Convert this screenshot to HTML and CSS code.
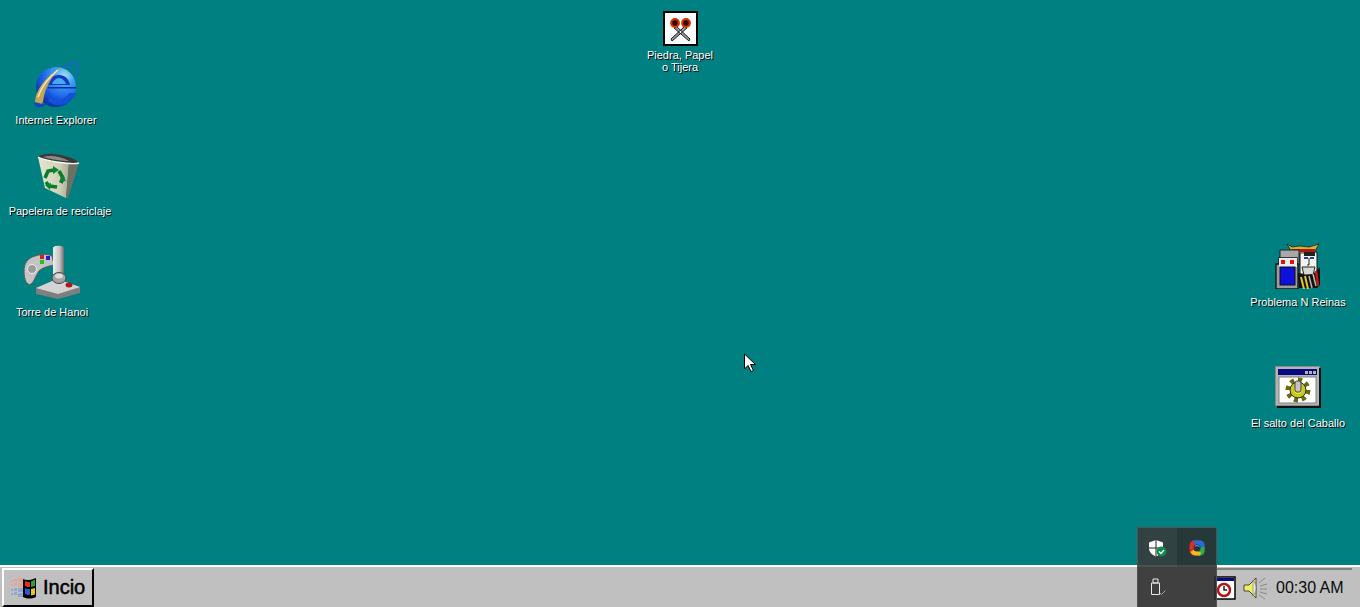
FILE: index.html
```html
<!DOCTYPE html>
<html lang="es">
<head>
  <meta charset="UTF-8">
  <title>Escritorio</title>
  <link rel="stylesheet" href="styles.css">
</head>
<body>
  <div class="desktop">
    <div class="desk-icon at-ie">
      <svg class="glyph" width="48" height="48" viewBox="0 0 48 48">
        <defs>
          <radialGradient id="ieBlue" cx="0.7" cy="0.22" r="0.85">
            <stop offset="0" stop-color="#a8e4fa"/>
            <stop offset="0.3" stop-color="#3f9ff4"/>
            <stop offset="0.65" stop-color="#1860e8"/>
            <stop offset="1" stop-color="#0a2c98"/>
          </radialGradient>
        </defs>
        <path d="M30 8C38 2 46 0 46 4c0 3-1 8-3 13" fill="none" stroke="#1c5fd8" stroke-width="1.500"/>
        <circle cx="24" cy="26" r="20" fill="url(#ieBlue)"/>
        <path d="M16 24c1-6 5-10 11-10s10 4 11 10z" fill="#0f3cc0"/>
        <path d="M20 23c1-3 4-6 7-6s6 3 7 6z" fill="#48a8f6"/>
        <path d="M16 26h28v1.500H16z" fill="#0c2c9c"/>
        <path d="M16 28c1 6 5 10 11 10 4 0 8-2 10-6h7c-3 7-9 12-17 12-4 0-7-1-10-3z" fill="#1450d8"/>
        <path d="M3 41C3 31 12 16 30 6c-11 10-17 20-19 35-2 3-6 3-8 0z" fill="#c4a558"/>
        <path d="M6 36C9 27 16 17 26 9" fill="none" stroke="#f2e8b8" stroke-width="1.600"/>
        <path d="M2 41c0 5 5 7 10 4 2-1 4-2 6-4-4 2-8 3-11 1z" fill="#1846c0"/>
      </svg>
      <span class="label">Internet Explorer</span>
    </div>

    <div class="desk-icon at-trash">
      <svg class="glyph" width="48" height="48" viewBox="0 0 48 48">
        <defs>
          <linearGradient id="binSide" x1="0" x2="1" y1="0" y2="0">
            <stop offset="0" stop-color="#e4e8d0"/>
            <stop offset="0.7" stop-color="#cdd1b6"/>
            <stop offset="1" stop-color="#a8ab96"/>
          </linearGradient>
        </defs>
        <path d="M2 5l31 6-3 35-21-10z" fill="url(#binSide)"/>
        <path d="M33 11l10 0-11 35-2 0z" fill="#6f7064"/>
        <path d="M2 5c4-4 13-4 23-2 8 2 15 4 18 8-8 2-33-2-41-6z" fill="#3a3a3a"/>
        <path d="M7 5c7-2 17-1 26 4-8 0-19-2-26-4z" fill="#8c8c8c"/>
        <path d="M2 5c8 4 33 8 41 6" fill="none" stroke="#f6f6ec" stroke-width="1.300"/>
        <g fill="none" stroke="#0a7a2c" stroke-width="3.600">
          <path d="M9 26l3-7 6-1"/>
          <path d="M23 19l4 7-2 5"/>
          <path d="M21 35l-8-1-3-4"/>
        </g>
        <g fill="#0a8436">
          <path d="M17 14l6 4-6 4z"/>
          <path d="M30 29l-7 1 3-7z"/>
          <path d="M14 38l-5-5 6-2z"/>
        </g>
      </svg>
      <span class="label">Papelera de reciclaje</span>
    </div>

    <div class="desk-icon at-hanoi">
      <svg class="glyph" width="58" height="54" viewBox="0 0 58 54">
        <defs>
          <linearGradient id="stick" x1="0" x2="1" y1="0" y2="0">
            <stop offset="0" stop-color="#eee"/>
            <stop offset="0.6" stop-color="#c4c4c4"/>
            <stop offset="1" stop-color="#6c6c6c"/>
          </linearGradient>
        </defs>
        <path d="M1 26c0-8 4-13 11-15 6-2 13-2 17 0l2 9c-6 1-12 3-15 6-3 4-5 11-8 13-4 2-7-4-7-13z" fill="#c4c4c4" stroke="#5c5c5c" stroke-width="1"/>
        <circle cx="9" cy="24" r="4.500" fill="#9b9b9b" stroke="#eee" stroke-width="1"/>
        <rect x="17" y="10" width="4" height="4" fill="#d02020"/>
        <rect x="23" y="11" width="4" height="4" fill="#2020c8"/>
        <rect x="17" y="15" width="4" height="4" fill="#20c020"/>
        <path d="M13 43l21-9 23 8v6L35 54 13 49z" fill="#7f7f7f"/>
        <path d="M13 43l21-9 23 8-22 7z" fill="#d4d4d4"/>
        <path d="M30 3c0-3 11-3 11 0v26H30z" fill="url(#stick)"/>
        <ellipse cx="36" cy="33" rx="7" ry="5.500" fill="#a4a4a4" stroke="#4a4a4a" stroke-width="1"/>
        <ellipse cx="36" cy="31" rx="4" ry="2.500" fill="#dcdcdc"/>
        <ellipse cx="46" cy="40" rx="3.500" ry="2.500" fill="#b01818"/>
      </svg>
      <span class="label">Torre de Hanoi</span>
    </div>

    <div class="desk-icon at-rps">
      <svg class="glyph" width="35" height="35" viewBox="0 0 35 35">
        <rect x="1" y="1" width="33" height="33" fill="#fff" stroke="#000" stroke-width="2"/>
        <path d="M13 15l14 13-1 2L11 17zM22 15L8 28l1 2 15-13z" fill="#9a9a9a" stroke="#1c1c1c" stroke-width="1"/>
        <circle cx="12" cy="12" r="3.800" fill="#2a0a00" stroke="#d83000" stroke-width="2.200"/>
        <circle cx="23" cy="12" r="3.800" fill="#2a0a00" stroke="#d83000" stroke-width="2.200"/>
      </svg>
      <span class="label">Piedra, Papel<br>o Tijera</span>
    </div>

    <div class="desk-icon at-queens">
      <svg class="glyph" width="46" height="46" viewBox="0 0 46 46">
        <path d="M25 9h17v22H25z" fill="#f4f4ee" stroke="#111" stroke-width="1"/>
        <path d="M12 1l5 3 8-1 9 1 10-3-4 7-5 2H20l-4-2z" fill="#d8b030" stroke="#111" stroke-width="0.700"/>
        <path d="M16 6h24v3H18z" fill="#b01810"/>
        <path d="M29 9h11v4H29z" fill="#202020"/>
        <path d="M29 15h4M35 15h4" stroke="#2a3ab0" stroke-width="2"/>
        <path d="M34 15v7h-2" fill="none" stroke="#222" stroke-width="1"/>
        <path d="M27 24h13l-2 8h-9z" fill="#d8d8d0" stroke="#222" stroke-width="1"/>
        <path d="M23 30l7 2 8-1 7-7v18l-3 3H24z" fill="#111"/>
        <path d="M26 34l3 12M30 33l3 13" stroke="#e0c830" stroke-width="2"/>
        <path d="M34 33l3 12M38 31l3 12" stroke="#b8b8b0" stroke-width="1.500"/>
        <path d="M41 28l2 15" stroke="#c01818" stroke-width="2.500"/>
        <path d="M5 7h19v16H5z" fill="#a8a8a8" stroke="#222" stroke-width="1"/>
        <path d="M1 21h3v-6h18v6h1v25H1z" fill="#9c9c9c" stroke="#111" stroke-width="1.300"/>
        <rect x="4" y="15" width="18" height="9" fill="#ececec"/>
        <path d="M6 17h4v4H6zM15 17h4v4h-4z" fill="#e01010"/>
        <rect x="5" y="24" width="15" height="18" fill="#0c10d8" stroke="#111" stroke-width="1"/>
      </svg>
      <span class="label">Problema N Reinas</span>
    </div>

    <div class="desk-icon at-knight">
      <svg class="glyph" width="46" height="42" viewBox="0 0 46 42">
        <rect x="0.500" y="0.500" width="44" height="39" fill="#b4b4b4" stroke="#8a8a8a" stroke-width="1"/>
        <path d="M45 2v39H2" fill="none" stroke="#111" stroke-width="2"/>
        <rect x="3" y="3" width="39" height="6" fill="#0a0a80"/>
        <rect x="30" y="5" width="3" height="3" fill="#b4b4b4"/>
        <rect x="34" y="5" width="3" height="3" fill="#b4b4b4"/>
        <rect x="38" y="5" width="3" height="3" fill="#b4b4b4"/>
        <rect x="4" y="11" width="37" height="26" fill="#fff" stroke="#808080" stroke-width="1"/>
        <circle cx="23" cy="24" r="10" fill="none" stroke="#6a6a10" stroke-width="5" stroke-dasharray="4 3.800"/>
        <circle cx="23" cy="24" r="8" fill="#c8c820" stroke="#2a2a00" stroke-width="1"/>
        <circle cx="23" cy="24" r="4" fill="#e8e830"/>
        <rect x="20" y="15" width="6" height="11" rx="2" fill="#c4c4c4" stroke="#444" stroke-width="1"/>
      </svg>
      <span class="label">El salto del Caballo</span>
    </div>

    <svg class="cursor" width="14" height="20" viewBox="0 0 14 20">
      <path d="M1.500 1v15l3.500-3.500 3 6 2.500-1-3-6h5z" fill="#fff" stroke="#000" stroke-width="1"/>
    </svg>
  </div>

  <div class="taskbar">
    <button class="start-btn">
      <svg width="28" height="22" viewBox="0 0 28 22">
        <g fill="#e0a898">
          <rect x="1" y="3" width="2" height="2"/><rect x="4" y="2" width="3" height="3"/><rect x="8" y="1" width="5" height="4"/>
          <rect x="1" y="7" width="2" height="2"/><rect x="4" y="6" width="3" height="3"/><rect x="8" y="6" width="5" height="4"/>
        </g>
        <g fill="#90a8d0">
          <rect x="1" y="12" width="2" height="2"/><rect x="4" y="11" width="3" height="3"/><rect x="8" y="11" width="5" height="4"/>
          <rect x="1" y="16" width="2" height="2"/><rect x="4" y="15" width="3" height="3"/><rect x="8" y="16" width="5" height="4"/>
        </g>
        <path d="M13 2c4 2 8 1 13-1v19c-5 2-9 2-13 0z" fill="#000"/>
        <path d="M15 4c2 1 3 1 5 1v5c-2 0-3 0-5-1z" fill="#e03018"/>
        <path d="M21 4.500l4-2V9l-4 1z" fill="#30a030"/>
        <path d="M15 11c2 1 3 1 5 1v6c-2 0-3 0-5-1z" fill="#2858d0"/>
        <path d="M21 12l4-1v6.500l-4 1z" fill="#f0c020"/>
      </svg>
      <span>Incio</span>
    </button>

    <div class="tray">
      <svg class="tray-cal" width="22" height="24" viewBox="0 0 22 24">
        <rect x="1" y="1" width="20" height="22" fill="#fff" stroke="#000" stroke-width="1.500"/>
        <rect x="2" y="2" width="18" height="3" fill="#0a0a80"/>
        <circle cx="10" cy="14" r="6" fill="#fff" stroke="#b01818" stroke-width="2.500"/>
        <path d="M10 10v4h3" fill="none" stroke="#222" stroke-width="1.500"/>
      </svg>
      <svg width="26" height="26" viewBox="0 0 26 26">
        <path d="M1 10h5l7-7v20l-7-7H1z" fill="#f0f060" stroke="#444" stroke-width="1"/>
        <path d="M10 5v16c2-2 3-5 3-8s-1-6-3-8z" fill="#e8e8e8" stroke="#555" stroke-width="0.500"/>
        <path d="M16 8l6-5M17 11l7-2M17 14h7M17 17l7 2M16 20l6 4" stroke="#8a8a8a" stroke-width="1"/>
      </svg>
      <span class="clock">00:30 AM</span>
    </div>

    <div class="flyout">
      <div class="fly-cell fly-hover">
        <svg width="20" height="18" viewBox="0 0 20 18">
          <path d="M8 1l7 2.500V9c0 4-3 7-7 8.500C4 16 1 13 1 9V3.500z" fill="#fff"/>
          <path d="M8 1v16.500M1 9h14" stroke="#222" stroke-width="1"/>
          <circle cx="13.500" cy="12.500" r="5" fill="#118a4e"/>
          <path d="M11 12.500l2 2 3-3.500" fill="none" stroke="#fff" stroke-width="1.200"/>
        </svg>
      </div>
      <div class="fly-cell">
        <svg width="16" height="16" viewBox="0 0 16 16">
          <rect width="15" height="15" x="0.500" y="0.500" rx="5" fill="#e02c28"/>
          <path d="M3.500 0.500H11c2.500 0 4.500 2 4.500 4.500v3H10z" fill="#1f6fe0"/>
          <path d="M15.500 7v4c0 2.500-2 4.500-4.500 4.500H9l1-8z" fill="#2cb04a"/>
          <path d="M1.500 12c1 2.500 3 3.500 5 3.500H11l1-3-7-3z" fill="#f4b820"/>
          <circle cx="8" cy="8" r="3.600" fill="#243636"/>
          <path d="M6 6.500c1.500-1.500 3.500-1 4.500.5" fill="none" stroke="#3a86e8" stroke-width="1.200"/>
        </svg>
      </div>
      <div class="fly-cell">
        <svg width="16" height="18" viewBox="0 0 16 18">
          <path d="M3 1h5v4H3zM1.500 5h8v11.500h-8z" fill="none" stroke="#e8e8e8" stroke-width="1"/>
          <path d="M10 15l1.500 1.500 4-4" fill="none" stroke="#a0a0a0" stroke-width="1"/>
        </svg>
      </div>
    </div>
  </div>
</body>
</html>
```

FILE: styles.css
```css
html, body {
  height: 100%;
  margin: 0;
  overflow: hidden;
}

body {
  display: flex;
  flex-direction: column;
  font-family: 'Liberation Sans', Arial, sans-serif;
  background-color: #008080;
}

.desktop {
  flex: 1;
  position: relative;
}

.desk-icon {
  position: absolute;
  width: 120px;
  display: flex;
  flex-direction: column;
  align-items: center;
  color: #fff;
}

.desk-icon .label {
  font-size: 11px;
  line-height: 12px;
  text-align: center;
  text-shadow: 1px 1px 0 #000;
}

.at-ie { left: -4px; top: 61px; }
.at-ie .glyph { margin-bottom: 5px; }
.at-trash { left: 0; top: 152px; }
.at-trash .glyph { margin-bottom: 5px; }
.at-hanoi { left: -8px; top: 245px; }
.at-hanoi .glyph { margin-bottom: 7px; }
.at-rps { left: 620px; top: 11px; }
.at-rps .glyph { margin-bottom: 3px; }
.at-queens { left: 1238px; top: 243px; }
.at-queens .glyph { margin-bottom: 7px; }
.at-knight { left: 1238px; top: 366px; }
.at-knight .glyph { margin-bottom: 9px; }

.cursor {
  position: absolute;
  left: 743px;
  top: 353px;
}

.taskbar {
  position: relative;
  height: 40px;
  flex-shrink: 0;
  display: flex;
  justify-content: space-between;
  background-color: #c0c0c0;
  border-top: 2px solid #fff;
}

.start-btn {
  display: flex;
  align-items: center;
  gap: 5px;
  width: 92px;
  margin: 1px 0 0 2px;
  padding: 0 0 0 6px;
  background-color: #c0c0c0;
  border: 2px solid;
  border-color: #fff #000 #000 #fff;
  font-family: inherit;
  font-size: 20px;
  color: #000;
  -webkit-text-stroke: 0.5px #000;
}

.tray {
  display: flex;
  align-items: center;
  gap: 7px;
  width: 136px;
  height: 38px;
  margin: 1px 8px 0 0;
  box-sizing: border-box;
  border-top: 2px solid #808080;
  font-size: 16px;
}

.tray-cal {
  margin-left: -2px;
}

.clock {
  white-space: nowrap;
  color: #0a0a0a;
}

.flyout {
  position: absolute;
  right: 143px;
  bottom: 0;
  width: 80px;
  height: 80px;
  box-sizing: border-box;
  display: grid;
  grid-template-columns: 39px 39px;
  grid-template-rows: 39px 39px;
  background-color: rgba(45, 45, 45, 0.87);
  border: 1px solid #4e5656;
  border-bottom: none;
}

.fly-cell {
  display: flex;
  align-items: center;
  justify-content: center;
}

.fly-hover {
  background-color: rgba(255, 255, 255, 0.05);
}
```
